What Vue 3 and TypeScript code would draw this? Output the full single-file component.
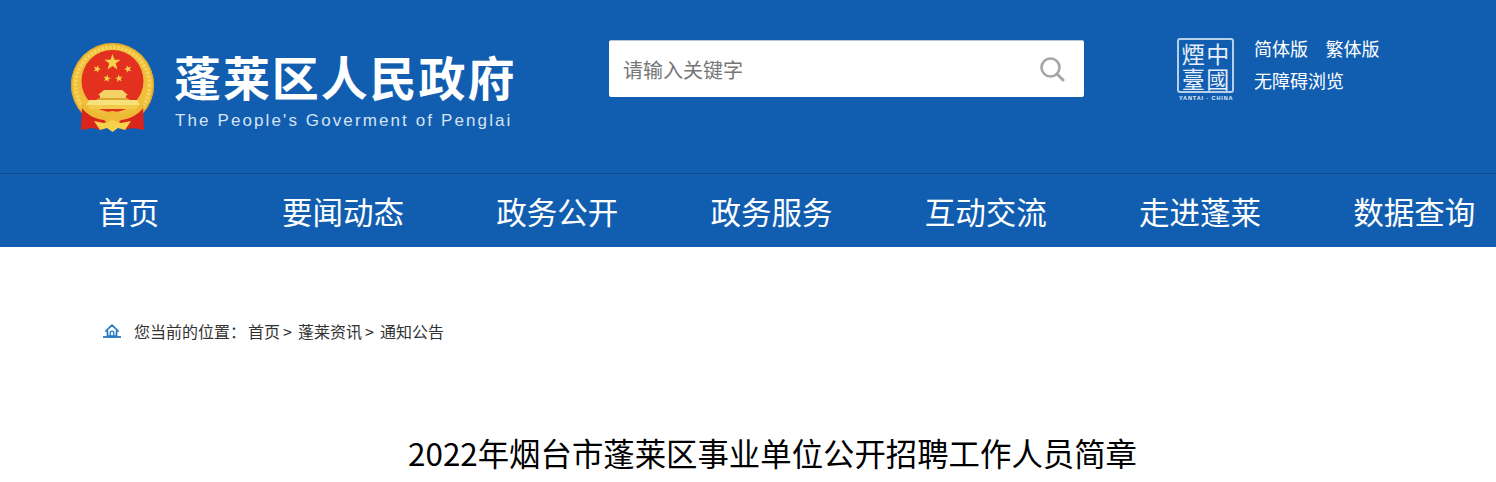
<script setup lang="ts">
const navItems = ['首页', '要闻动态', '政务公开', '政务服务', '互动交流', '走进蓬莱', '数据查询']

const stars = [
  { x: 52.5, y: 27.5, r: 8.5, rot: 0 },
  { x: 37, y: 34, r: 4, rot: 20 },
  { x: 68, y: 34, r: 4, rot: -20 },
  { x: 47, y: 43.5, r: 4, rot: 10 },
  { x: 59, y: 43.5, r: 4, rot: -10 },
]

function starPoints(s: { x: number; y: number; r: number; rot: number }) {
  const pts: string[] = []
  for (let i = 0; i < 10; i++) {
    const rad = i % 2 === 0 ? s.r : s.r * 0.4
    const a = ((s.rot + i * 36 - 90) * Math.PI) / 180
    pts.push(`${(s.x + rad * Math.cos(a)).toFixed(2)},${(s.y + rad * Math.sin(a)).toFixed(2)}`)
  }
  return pts.join(' ')
}
</script>

<template>
  <div class="page">
    <header class="top">
      <div class="brand">
        <svg class="emblem" viewBox="0 0 105 105" width="105" height="105">
          <!-- wheat ring -->
          <ellipse cx="52.5" cy="50" rx="41.5" ry="42" fill="#efbe3b" />
          <ellipse cx="52.5" cy="50" rx="37" ry="37.500" fill="none" stroke="#f7d65c" stroke-width="3.500" stroke-dasharray="2.500 1.500" />
          <ellipse cx="52.5" cy="50" rx="41" ry="41.500" fill="none" stroke="#dc9f28" stroke-width="1" />
          <circle cx="52.5" cy="46" r="31" fill="#e3301f" />
          <polygon v-for="(s, i) in stars" :key="i" :points="starPoints(s)" fill="#f8d24a" />
          <!-- gate -->
          <path d="M44 55h18l6 5-2 .5V64H40v-3.500l-2-.5z" fill="#f3d266" />
          <path d="M39 63h28l3 2H36z" fill="#dca52f" />
          <path d="M29 65h48l3 5H26z" fill="#f8e07a" />
          <path d="M28 70h50l-1.500 4H29.500z" fill="#f2ca4c" />
          <!-- ribbons -->
          <path d="M22 71c5 6 14 11 22 12l3 5-5 7-10-2-11 2z" fill="#d9251c" />
          <path d="M83 71c-5 6-14 11-22 12l-3 5 5 7 10-2 11 2z" fill="#d9251c" />
          <path d="M44 88h17l3 3H41z" fill="#c81f18" />
          <!-- knot and flower -->
          <path d="M22 68c7 8 15 11 23 12 2-3 5-4 7.500-4s5.500 1 7.500 4c8-1 16-4 23-12l1 4c-6 8-14 12-23 13l-3 3h-11l-3-3c-9-1-17-5-23-13z" fill="#eeba36" />
          <path d="M34 86l10 2 8.500-3 8.500 3 10-2-6 9-7-2-5.500 4-5.500-4-7 2z" fill="#f5d14c" />
        </svg>
        <div class="brand-text">
          <div class="brand-name">蓬莱区人民政府</div>
          <div class="brand-en">The People's Goverment of Penglai</div>
        </div>
      </div>

      <div class="search">
        <span class="search-hint">请输入关键字</span>
        <svg class="search-icon" viewBox="0 0 26 26" width="26" height="26">
          <circle cx="11.500" cy="11.500" r="9" fill="none" stroke="#a6a6a6" stroke-width="2.600" />
          <path d="M18 18l6 6" stroke="#a6a6a6" stroke-width="3" stroke-linecap="round" />
        </svg>
      </div>

      <div class="city">
        <div class="seal-wrap">
          <div class="seal">
            <span>煙</span><span>中</span><span>臺</span><span>國</span>
          </div>
          <div class="seal-en">YANTAI · CHINA</div>
        </div>
        <div class="links">
          <div class="links-row"><a>简体版</a><a>繁体版</a></div>
          <div class="links-row"><a>无障碍浏览</a></div>
        </div>
      </div>
    </header>

    <nav class="nav">
      <a v-for="item in navItems" :key="item" class="nav-item">{{ item }}</a>
    </nav>

    <div class="crumbs">
      <svg class="home" viewBox="0 0 18 14" width="18" height="14">
        <path d="M9 1.200L2.800 7h1.700v5h9V7h1.700z" fill="none" stroke="#2676c6" stroke-width="1.700" stroke-linejoin="round" />
        <path d="M7.200 12V9a1.800 1.800 0 0 1 3.600 0v3" fill="none" stroke="#2676c6" stroke-width="1.300" />
        <path d="M0 13h18" stroke="#2676c6" stroke-width="1.800" />
      </svg>
      <span>您当前的位置：</span>
      <a class="crumb-first">首页</a><span class="sep">&gt;</span>
      <a>蓬莱资讯</a><span class="sep">&gt;</span>
      <a>通知公告</a>
    </div>

    <h1 class="headline">2022年烟台市蓬莱区事业单位公开招聘工作人员简章</h1>
  </div>
</template>

<style>
html, body {
  margin: 0;
  overflow: hidden;
}
</style>

<style scoped>
.page {
  width: 1496px;
  height: 482px;
  overflow: hidden;
  background: #fff;
  font-family: "Noto Sans CJK SC", "Noto Sans", sans-serif;
}

.top {
  display: flex;
  align-items: flex-start;
  height: 173px;
  background: #115eb1;
  border-bottom: 1px solid #0d4a8b;
}

.brand {
  display: flex;
  align-items: flex-start;
  width: 515px;
  padding: 35px 0 0 60px;
  box-sizing: border-box;
}

.emblem {
  flex: none;
}

.brand-text {
  margin-left: 10px;
  padding-top: 11px;
  color: #fff;
}

.brand-name {
  margin-left: -1px;
  font-size: 47px;
  font-weight: 700;
  line-height: 60px;
  letter-spacing: 1.900px;
  white-space: nowrap;
}

.brand-en {
  margin-top: 5px;
  font-family: "Liberation Sans", sans-serif;
  font-size: 17px;
  line-height: 20px;
  letter-spacing: 2.110px;
  color: #d5e3f3;
  white-space: nowrap;
}

.search {
  display: flex;
  align-items: center;
  justify-content: space-between;
  box-sizing: border-box;
  width: 475px;
  height: 57px;
  margin: 40px 0 0 94px;
  padding: 0 8px 0 14px;
  background: #fff;
  border-top: 1px solid #b9c4d2;
  border-radius: 2px;
}

.search-hint {
  font-size: 20px;
  color: #767676;
}

.search-icon {
  margin-right: 11px;
}

.city {
  display: flex;
  align-items: flex-start;
  margin: 38px 0 0 93px;
}

.seal-wrap {
  width: 57px;
  color: #e6eef8;
}

.seal {
  display: grid;
  grid-template-columns: 1fr 1fr;
  box-sizing: border-box;
  width: 57px;
  height: 55px;
  padding: 1px 2px;
  border: 2px solid #b6cfea;
  border-radius: 3px;
  font-family: "Noto Sans CJK TC", sans-serif;
  font-size: 23px;
  line-height: 25px;
  text-align: center;
}

.seal-en {
  margin-top: 2px;
  margin-left: 2px;
  font-family: "Liberation Sans", sans-serif;
  font-size: 5.500px;
  font-weight: 700;
  letter-spacing: 0.900px;
  line-height: 7px;
  white-space: nowrap;
}

.links {
  margin-left: 20px;
  color: #fff;
  font-size: 18px;
}

.links-row {
  display: flex;
  gap: 17.500px;
  line-height: 32px;
  height: 32px;
  margin-top: -6px;
}

.links-row + .links-row {
  margin-top: 0;
}

.nav {
  display: flex;
  width: 1500px;
  height: 73px;
  margin-left: 22px;
  background: #115eb1;
  box-shadow: -22px 0 0 #115eb1;
}

.nav-item {
  flex: 1;
  font-size: 30.500px;
  line-height: 74px;
  text-align: center;
  color: #fff;
  white-space: nowrap;
  transform: translateX(-0.5px);
}

.crumbs {
  display: flex;
  align-items: center;
  height: 24px;
  margin-top: 72px;
  padding-left: 103px;
  font-size: 16px;
  color: #333;
}

.home {
  margin-right: 13px;
}

.crumb-first {
  margin-left: 2px;
}

.sep {
  margin: 0 7px 0 3px;
  width: 8px;
}

.headline {
  margin: 87px 0 0;
  font-size: 31.400px;
  font-weight: 400;
  line-height: 46px;
  text-align: center;
  color: #000;
  padding-left: 49px;
}
</style>
